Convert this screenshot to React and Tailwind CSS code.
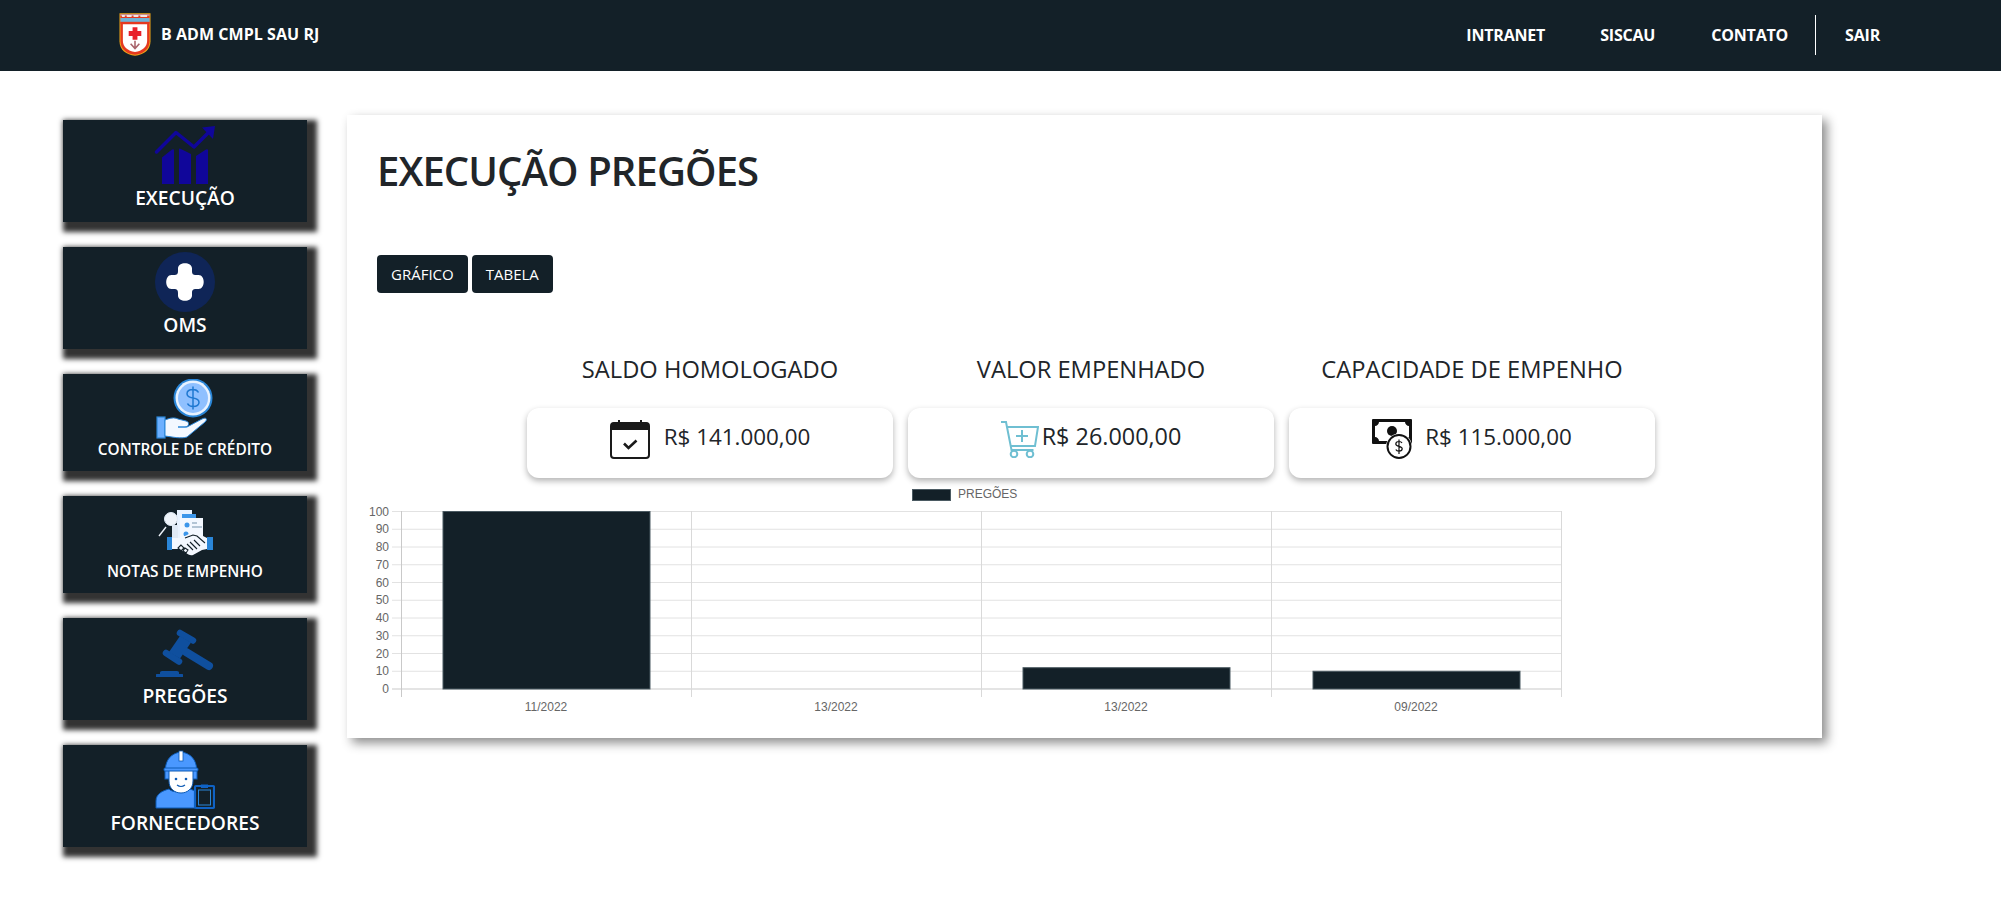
const FONT = "font-['Open_Sans',sans-serif]";

const bars = [
  { label: "11/2022", value: 100 },
  { label: "13/2022", value: 0 },
  { label: "13/2022", value: 12 },
  { label: "09/2022", value: 10 },
];

function ShieldLogo() {
  return (
    <svg viewBox="0 0 33 45" className="w-[32px] h-[45px] shrink-0">
      <path d="M.5.5h32v29c0 9-7 14-16 15C7.500 43.500.5 38.500.5 29.500z" fill="#f0a818" />
      <path d="M1.500 1.500h30v28c0 8-6.500 13-15 14-8.500-1-15-6-15-14z" fill="#e5391f" />
      <rect x="1.500" y="1.500" width="30" height="2" fill="#c9949a" />
      <path d="M3 3.500h3M8 3.500h5M15 3.500h5M22 3.500h7" stroke="#f4e4e4" strokeWidth="2" />
      <rect x="1.500" y="5.500" width="30" height="4" fill="#6db4d8" />
      <rect x="1.500" y="9.500" width="30" height="2" fill="#e5391f" />
      <path d="M4 12h25v17c0 6.500-5 10.500-12.500 11.500C9 39.500 4 35.500 4 29z" fill="#fff" />
      <path d="M14 15h5v4h4v5h-4v4h-5v-4h-4v-5h4z" fill="#e8202a" />
      <path d="M16.500 29v8M12 32l4.500 5 4.500-5" fill="none" stroke="#a8636b" strokeWidth="1.600" />
    </svg>
  );
}

function ExecucaoIcon() {
  return (
    <svg viewBox="0 0 60 60" className="w-[60px] h-[60px] overflow-visible">
      <path d="M1.500 27 21 7.500 39 22 57 4" fill="none" stroke="#10069a" strokeWidth="3.500" strokeLinecap="round" strokeLinejoin="round" />
      <path d="M47 2.500 60 1l-2 13z" fill="#10069a" />
      <path d="M7 32.500 17 24.500q2-1 2 1V59H7zM24 24.500q0-1.500 2-.500l10 5V59H24zM41 31l10-6.500q2-1 2 1V59H41z" fill="#10069a" />
    </svg>
  );
}

function OmsIcon() {
  return (
    <svg viewBox="0 0 60 60" className="w-[60px] h-[60px]">
      <circle cx="30" cy="30" r="30" fill="#0f2557" />
      <path d="M23 19v-2.500c0-7 14-7 14 0V19c0 3 1 4 4 4h2.500c7 0 7 14 0 14H41c-3 0-4 1-4 4v2.500c0 7-14 7-14 0V41c0-3-1-4-4-4h-2.500c-7 0-7-14 0-14H19c3 0 4-1 4-4z" fill="#fff" />
    </svg>
  );
}

function CreditoIcon() {
  return (
    <svg viewBox="0 0 60 60" className="w-[60px] h-[60px]">
      <circle cx="38" cy="19" r="19.500" fill="#2a86d8" />
      <circle cx="38" cy="19" r="17.500" fill="#e8f2ff" />
      <circle cx="38" cy="19" r="15" fill="#8fc0ff" />
      <path d="M43.500 13.500c-1-2-3-3-5.500-3-3.500 0-6 1.500-6 4.300s2.500 3.700 6 4.200 6 1.500 6 4.300-2.500 4.200-6 4.200c-2.500 0-4.500-1-5.500-3M38 7.500v23" fill="none" stroke="#1f78d1" strokeWidth="1.500" />
      <rect x="2" y="38" width="8" height="21" fill="#6db0ff" stroke="#2a86d8" strokeWidth="1.200" />
      <path d="M10 41c5-2 9-3 13-1l8 2c4 1 3 6-1 6h-7 9l15-8c4-2 6 0 3 3L32 58c-6 2-14 0-22-1z" fill="#f3f8ff" stroke="#2a86d8" strokeWidth="1" />
    </svg>
  );
}

function NotasIcon() {
  return (
    <svg viewBox="0 0 60 60" className="w-[60px] h-[60px]">
      <rect x="22" y="9" width="15" height="30" fill="#e8f2ff" />
      <rect x="27" y="13" width="14" height="26" fill="#3c96ea" />
      <rect x="25" y="17" width="23" height="26" fill="#f3f8ff" />
      <circle cx="32" cy="24" r="2.500" fill="#3c96ea" />
      <path d="M37 22h5M37 26h10" stroke="#9fb4c8" strokeWidth="1.400" />
      <circle cx="31" cy="33" r="2.500" fill="#3c96ea" />
      <rect x="17" y="24" width="6" height="16" fill="#dfe9f5" />
      <circle cx="16" cy="18" r="6.500" fill="#eef3fa" stroke="#dfe9f5" />
      <path d="M4 35l7-9" stroke="#eef3fa" strokeWidth="1.400" />
      <path d="M17 37h9l8-4 8-1 10 5v11l-5 1-9 5c-3 1-5-1-7-2l-7-4H17z" fill="#f3f8ff" />
      <path d="M30 37l8-3 4 1 8 7M32 43l6 6M35 41l7 7M39 39l6 6M26 44l-3 3 3 3 3-3zM30 47l-2 3 3 2 2-3z" fill="none" stroke="#132028" strokeWidth="1.100" />
      <rect x="12" y="36" width="5" height="13" fill="#2a86d8" />
      <rect x="52" y="36" width="6" height="13" fill="#2a86d8" />
    </svg>
  );
}

function PregoesIcon() {
  return (
    <svg viewBox="0 0 60 60" className="w-[60px] h-[60px]">
      <path d="M25 10 38 17.500M11 30l13 8.500" stroke="#0f4f9e" strokeWidth="6.500" strokeLinecap="round" fill="none" />
      <path d="M25 13 36 19.500 25 35.500 14 29z" fill="#0f4f9e" />
      <path d="M31 29 54 43" stroke="#0f4f9e" strokeWidth="8" strokeLinecap="round" fill="none" />
      <path d="M5 49.500q0-1.500 2-1.500h15q2 0 2 1.500V51h3.500q.5 0 .5 1v2H1v-2q0-1 .5-1H5z" fill="#0f4f9e" />
    </svg>
  );
}

function FornecedoresIcon() {
  return (
    <svg viewBox="0 0 60 60" className="w-[60px] h-[60px]">
      <path d="M1 58v-7c0-7 6-10 13-12 3 4 17 4 21 0l5 2v17z" fill="#4a98ff" stroke="#0d5bb5" strokeWidth="1" />
      <rect x="10" y="20" width="5" height="9" fill="#4a98ff" stroke="#0d5bb5" />
      <rect x="37" y="20" width="5" height="9" fill="#4a98ff" stroke="#0d5bb5" />
      <path d="M14 20h24v11c0 8-6 12-12 12s-12-4-12-12z" fill="#fff" stroke="#0d5bb5" />
      <circle cx="21" cy="29" r="1.300" fill="#0d5bb5" />
      <circle cx="31" cy="29" r="1.300" fill="#0d5bb5" />
      <path d="M22 35q4 3 8 0" fill="none" stroke="#0d5bb5" strokeWidth="1.200" />
      <path d="M10.500 19c0-9 6-16 15.500-17 9.500 1 15.500 8 15.500 17z" fill="#4a98ff" stroke="#0d5bb5" />
      <rect x="9" y="18" width="34" height="3" rx="1" fill="#4a98ff" stroke="#0d5bb5" />
      <rect x="24" y="1" width="4" height="10" fill="#fff" stroke="#0d5bb5" strokeWidth=".8" />
      <rect x="40" y="36" width="19" height="22" rx="1" fill="#132028" stroke="#0f62c4" strokeWidth="2.200" />
      <rect x="43.500" y="40" width="12" height="15" fill="#132028" stroke="#2a86d8" strokeWidth="1" />
      <rect x="46" y="34.500" width="7" height="3.500" fill="#0f62c4" />
    </svg>
  );
}

function CalendarIcon() {
  return (
    <svg viewBox="0 0 40 40" className="w-10 h-10 shrink-0">
      <path d="M9 1v5M31 1v5" stroke="#1a1a1a" strokeWidth="2" />
      <path d="M4 3.500h32a3 3 0 0 1 3 3V11H1V6.500a3 3 0 0 1 3-3z" fill="#1a1a1a" />
      <rect x="1" y="4" width="38" height="35" rx="3" fill="none" stroke="#1a1a1a" strokeWidth="2" />
      <path d="M14 24.500l4.500 4.500 8-7.500" fill="none" stroke="#1a1a1a" strokeWidth="2.600" />
    </svg>
  );
}

function CartIcon() {
  return (
    <svg viewBox="0 0 38 37" className="w-[38px] h-[37px] shrink-0">
      <path d="M0 1h5l5.500 28h22M6 6h31l-3 19H10" fill="none" stroke="#6fbfd2" strokeWidth="2" />
      <path d="M21 9v12M15 15h12" stroke="#6fbfd2" strokeWidth="2" />
      <circle cx="13" cy="33" r="3.300" fill="none" stroke="#6fbfd2" strokeWidth="2" />
      <circle cx="29" cy="33" r="3.300" fill="none" stroke="#6fbfd2" strokeWidth="2" />
    </svg>
  );
}

function MoneyIcon() {
  return (
    <svg viewBox="0 0 41 40" className="w-[41px] h-10 shrink-0">
      <rect x="0" y="0" width="40" height="25" rx="1" fill="#111" />
      <path d="M7 3h26c0 2 2 4 4 4v11c-2 0-4 2-4 4H7c0-2-2-4-4-4V7c2 0 4-2 4-4z" fill="#fff" />
      <circle cx="20" cy="12" r="5" fill="#111" />
      <circle cx="27" cy="27.500" r="13" fill="#fff" />
      <circle cx="27" cy="27.500" r="11.500" fill="#fff" stroke="#111" strokeWidth="2" />
      <path d="M30 24c-.5-1-1.600-1.500-3-1.500-2 0-3.200 1-3.200 2.400s1.200 2 3.200 2.400 3.200 1 3.200 2.500-1.200 2.400-3.200 2.400c-1.400 0-2.600-.5-3.200-1.700M27 20.500v14.500" fill="none" stroke="#111" strokeWidth="1.200" />
    </svg>
  );
}

function Chart() {
  const x0 = 41;
  const step = 290;
  const top = 28;
  const unit = 1.775;
  const ticks = [100, 90, 80, 70, 60, 50, 40, 30, 20, 10, 0];
  return (
    <svg width="1210" height="250" className="block font-['Liberation_Sans',sans-serif]">
      <rect x="552.500" y="6.500" width="38" height="11" fill="#132028" stroke="#4b5a62" />
      <text x="598" y="15" fontSize="12" fill="#666">PREGÕES</text>
      {ticks.map((t) => {
        const y = top + (100 - t) * unit + 0.5;
        return (
          <g key={t}>
            <line x1={x0 - 9} x2={x0 + step * 4} y1={y} y2={y} stroke={t === 0 ? "#c9c9c9" : "#e2e2e2"} />
            <text x={x0 - 12} y={y + 4} fontSize="12" fill="#666" textAnchor="end">{t}</text>
          </g>
        );
      })}
      {[0, 1, 2, 3, 4].map((i) => (
        <line key={i} x1={x0 + step * i + 0.5} x2={x0 + step * i + 0.5} y1={top} y2={top + 186} stroke={i === 0 ? "#c9c9c9" : "#d9d9d9"} />
      ))}
      {bars.map((b, i) => (
        <g key={i}>
          {b.value > 0 && (
            <rect x={x0 + step * i + 42} y={top + (100 - b.value) * unit + 0.5} width="207" height={b.value * unit} fill="#132028" stroke="#4b5a62" />
          )}
          <text x={x0 + step * i + 145} y={top + 200} fontSize="12" fill="#666" textAnchor="middle">{b.label}</text>
        </g>
      ))}
    </svg>
  );
}

function SideCard({ icon, label, height, textClass }) {
  return (
    <a className={`flex flex-col items-center w-full pt-[5px] bg-[#132028] text-white shadow-[5px_5px_5px_5px_#333] ${height}`}>
      {icon}
      <span className={`mt-px font-semibold ${textClass}`}>{label}</span>
    </a>
  );
}

function Stat({ title, value, icon, gap, valueClass }) {
  return (
    <div className="w-[366px] flex flex-col items-center">
      <h3 className="h-[32px] leading-[32px] text-[23.700px] text-[#212529] whitespace-nowrap">{title}</h3>
      <div className={`mt-[23px] w-full h-[70px] pb-[8px] flex items-center justify-center rounded-xl bg-white shadow-[0_3px_6px_rgba(0,0,0,0.3)] ${gap}`}>
        {icon}
        <span className={`-mt-[4px] text-[#212529] ${valueClass}`}>{value}</span>
      </div>
    </div>
  );
}

export default function App() {
  return (
    <div className={`w-[2001px] h-[902px] overflow-hidden bg-white ${FONT}`}>
      <header className="h-[71px] bg-[#132028] flex items-center justify-between pl-[119px] pr-[121px] text-white">
        <div className="flex items-center gap-[10px] font-bold text-[16px] tracking-[0.05px]">
          <div className="-mt-[2px]">
            <ShieldLogo />
          </div>
          <span className="-mt-[3px]">B ADM CMPL SAU RJ</span>
        </div>
        <nav className="-mt-px flex items-center font-bold text-[16px] tracking-[-0.2px]">
          <a>INTRANET</a>
          <a className="ml-[55px]">SISCAU</a>
          <a className="ml-[56px]">CONTATO</a>
          <span className="ml-[27px] mr-[29px] w-px h-10 bg-white" />
          <a>SAIR</a>
        </nav>
      </header>

      <div className="flex pl-[63px] pt-[44px] gap-[40px]">
        <aside className="w-[244px] shrink-0 mt-[5px] flex flex-col gap-[25px]">
          <SideCard icon={<ExecucaoIcon />} label="EXECUÇÃO" height="h-[102px]" textClass="text-[19.200px] leading-6" />
          <SideCard icon={<OmsIcon />} label="OMS" height="h-[102px]" textClass="text-[19.200px] leading-6" />
          <SideCard icon={<CreditoIcon />} label="CONTROLE DE CRÉDITO" height="h-[97px]" textClass="text-[15.400px] leading-5" />
          <SideCard icon={<NotasIcon />} label="NOTAS DE EMPENHO" height="h-[97px]" textClass="text-[15.400px] leading-5" />
          <SideCard icon={<PregoesIcon />} label="PREGÕES" height="h-[102px]" textClass="text-[19.200px] leading-6" />
          <SideCard icon={<FornecedoresIcon />} label="FORNECEDORES" height="h-[102px]" textClass="text-[19.200px] leading-6" />
        </aside>

        <main className="w-[1475px] h-[623px] bg-white shadow-[5px_5px_10px_rgba(0,0,0,0.45)] pl-[30px] pt-[28px]">
          <h1 className="text-[40px] leading-[56px] font-semibold tracking-[-0.9px] text-[#212529]">EXECUÇÃO PREGÕES</h1>
          <div className="mt-[56px] flex gap-[4px]">
            <button className="h-[38px] px-[14px] rounded bg-[#132028] text-white text-[15px]">GRÁFICO</button>
            <button className="h-[38px] px-[14px] rounded bg-[#132028] text-white text-[15px]">TABELA</button>
          </div>
          <div className="mt-[60px] ml-[150px] flex gap-[15px]">
            <Stat title="SALDO HOMOLOGADO" value="R$ 141.000,00" icon={<CalendarIcon />} gap="gap-[14px]" valueClass="text-[22.400px]" />
            <Stat title="VALOR EMPENHADO" value="R$ 26.000,00" icon={<CartIcon />} gap="gap-[3px]" valueClass="text-[23.400px]" />
            <Stat title="CAPACIDADE DE EMPENHO" value="R$ 115.000,00" icon={<MoneyIcon />} gap="gap-[12px]" valueClass="text-[22.400px]" />
          </div>
          <div className="mt-[5px] -ml-[17px]">
            <Chart />
          </div>
        </main>
      </div>
    </div>
  );
}
